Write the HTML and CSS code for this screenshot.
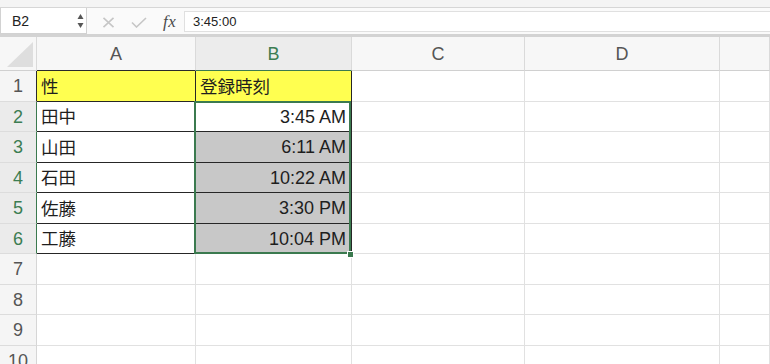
FILE: index.html
```html
<!DOCTYPE html>
<html lang="ja">
<head>
<meta charset="utf-8">
<title>Sheet</title>
<link rel="stylesheet" href="styles.css">
</head>
<body>
<div class="app">
  <div class="topstrip"></div>
  <div class="fbar">
    <div class="namebox">
      <span class="nb-text">B2</span>
      <svg class="spin" width="7" height="16" viewBox="0 0 7 16"><path d="M3.5 1 L6.5 6 L0.5 6 Z" fill="#555"/><path d="M0.5 10 L6.5 10 L3.5 15 Z" fill="#555"/></svg>
    </div>
    <div class="fbtns">
      <svg class="ic-x" width="13" height="11" viewBox="0 0 13 11"><path d="M1.5 0.8 L11.5 10.2 M11.5 0.8 L1.5 10.2" stroke="#c6c6c6" stroke-width="1.6" fill="none"/></svg>
      <svg class="ic-ok" width="16" height="11" viewBox="0 0 16 11"><path d="M1 5.5 L5.5 10 L15 1" stroke="#c6c6c6" stroke-width="1.6" fill="none"/></svg>
      <span class="fx">fx</span>
    </div>
    <div class="finput">3:45:00</div>
  </div>
  <div class="sheet">
    <div class="cell ch corner"><svg width="27" height="26" viewBox="0 0 27 26"><path d="M26 0 L26 25 L0 25 Z" fill="#dedede"/></svg></div>
    <div class="cell ch tbl">A</div>
    <div class="cell ch active">B</div>
    <div class="cell ch">C</div>
    <div class="cell ch">D</div>
    <div class="cell ch"></div>

    <div class="cell rh tbl">1</div>
    <div class="cell t yellow jp">性</div>
    <div class="cell t yellow jp">登録時刻</div>
    <div class="cell"></div><div class="cell"></div><div class="cell"></div>

    <div class="cell rh active">2</div>
    <div class="cell t jp">田中</div>
    <div class="cell t num b2">3:45 AM
      <div class="selection"><div class="handle"></div></div>
    </div>
    <div class="cell"></div><div class="cell"></div><div class="cell"></div>

    <div class="cell rh active">3</div>
    <div class="cell t jp">山田</div>
    <div class="cell t num grey">6:11 AM</div>
    <div class="cell"></div><div class="cell"></div><div class="cell"></div>

    <div class="cell rh active">4</div>
    <div class="cell t jp">石田</div>
    <div class="cell t num grey">10:22 AM</div>
    <div class="cell"></div><div class="cell"></div><div class="cell"></div>

    <div class="cell rh active">5</div>
    <div class="cell t jp">佐藤</div>
    <div class="cell t num grey">3:30 PM</div>
    <div class="cell"></div><div class="cell"></div><div class="cell"></div>

    <div class="cell rh active">6</div>
    <div class="cell t jp">工藤</div>
    <div class="cell t num grey">10:04 PM</div>
    <div class="cell"></div><div class="cell"></div><div class="cell"></div>

    <div class="cell rh">7</div>
    <div class="cell"></div><div class="cell"></div><div class="cell"></div><div class="cell"></div><div class="cell"></div>

    <div class="cell rh">8</div>
    <div class="cell"></div><div class="cell"></div><div class="cell"></div><div class="cell"></div><div class="cell"></div>

    <div class="cell rh">9</div>
    <div class="cell"></div><div class="cell"></div><div class="cell"></div><div class="cell"></div><div class="cell"></div>

    <div class="cell rh">10</div>
    <div class="cell"></div><div class="cell"></div><div class="cell"></div><div class="cell"></div><div class="cell"></div>
  </div>
</div>
</body>
</html>
```
FILE: styles.css
```css
* { box-sizing: border-box; }
html, body { margin: 0; padding: 0; background: #ffffff; }
body {
  width: 770px;
  height: 364px;
  overflow: hidden;
  font-family: "Liberation Sans", "Noto Sans CJK JP", Arial, sans-serif;
  color: #1e1e1e;
}
.app { display: flex; flex-direction: column; width: 770px; }

.topstrip {
  height: 8px;
  background: #f4f4f4;
  border-bottom: 1px solid #d6d6d6;
}

.fbar {
  height: 29px;
  display: flex;
  align-items: flex-start;
  background: #fafafa;
  border-bottom: 3px solid #d3d3d3;
}
.namebox {
  width: 87px;
  height: 26px;
  background: #ffffff;
  border: 1px solid #d2d2d2;
  border-top: none;
  display: flex;
  align-items: center;
  justify-content: space-between;
  padding: 0 2px 0 11px;
}
.nb-text { font-size: 14px; color: #222; }
.spin { display: block; margin-right: 0; }

.fbtns {
  width: 97px;
  height: 26px;
  display: flex;
  align-items: center;
  padding-left: 15px;
}
.ic-x { display: block; margin-top: 2px; }
.ic-ok { display: block; margin-left: 16px; margin-top: 3px; }
.fx {
  margin-left: 16px;
  font-family: "Liberation Serif", "DejaVu Serif", serif;
  font-style: italic;
  font-size: 17px;
  color: #4a4a4a;
  letter-spacing: 0.5px;
  margin-top: 1px;
}
.finput {
  flex: 1;
  height: 21px;
  margin-top: 3px;
  background: #ffffff;
  border: 1px solid #e0e0e0;
  border-right: none;
  font-size: 13px;
  color: #222;
  padding-left: 8px;
  line-height: 19px;
}

.sheet {
  position: relative;
  display: grid;
  grid-template-columns: 37px 159px 156px 173px 195px 1fr;
  grid-template-rows: 34px 31px 30px 31px 30px 31px 30px 31px 30px 31px 30px;
}
.cell {
  border-right: 1px solid #e1e1e1;
  border-bottom: 1px solid #e1e1e1;
  font-size: 18px;
  display: flex;
  align-items: center;
  overflow: visible;
  white-space: nowrap;
}
.ch {
  background: #f7f7f7;
  border-right-color: #dadada;
  border-bottom-color: #d0d0d0;
  justify-content: center;
  color: #555;
  font-size: 18px;
  padding-top: 2px;
}
.ch.corner { align-items: flex-end; justify-content: flex-end; padding: 0 2px 2px 0; }
.ch.corner svg { display: block; }
.ch.tbl { border-bottom-color: #2a2a2a; }
.ch.active { background: #ececec; color: #3c7d52; border-bottom-color: #3b7a4f; }

.rh {
  background: #f5f5f5;
  border-right-color: #d6d6d6;
  border-bottom-color: #dcdcdc;
  justify-content: center;
  color: #555;
  font-size: 18px;
  padding-top: 1px;
}
.rh.tbl { border-right-color: #2a2a2a; }
.rh.active { background: #ebebeb; color: #3c7d52; border-right-color: #3b7a4f; }

.t { border-right-color: #262626; border-bottom-color: #262626; padding-left: 4px; }
.jp { font-family: "Noto Sans CJK JP", "Liberation Sans", sans-serif; font-size: 17.5px; padding-bottom: 2px; }
.yellow { background: #ffff50; }
.grey { background: #c8c8c8; }
.num { justify-content: flex-end; padding-right: 5px; padding-top: 1px; }
.b2 { position: relative; }

.selection {
  position: absolute;
  left: -2px;
  top: -1px;
  width: 157px;
  height: 153px;
  border: 2px solid #3b7a4f;
  pointer-events: none;
  z-index: 2;
}
.handle {
  position: absolute;
  right: -5px;
  bottom: -6px;
  width: 7px;
  height: 7px;
  background: #3b7a4f;
  border: 1px solid #ffffff;
}
```
